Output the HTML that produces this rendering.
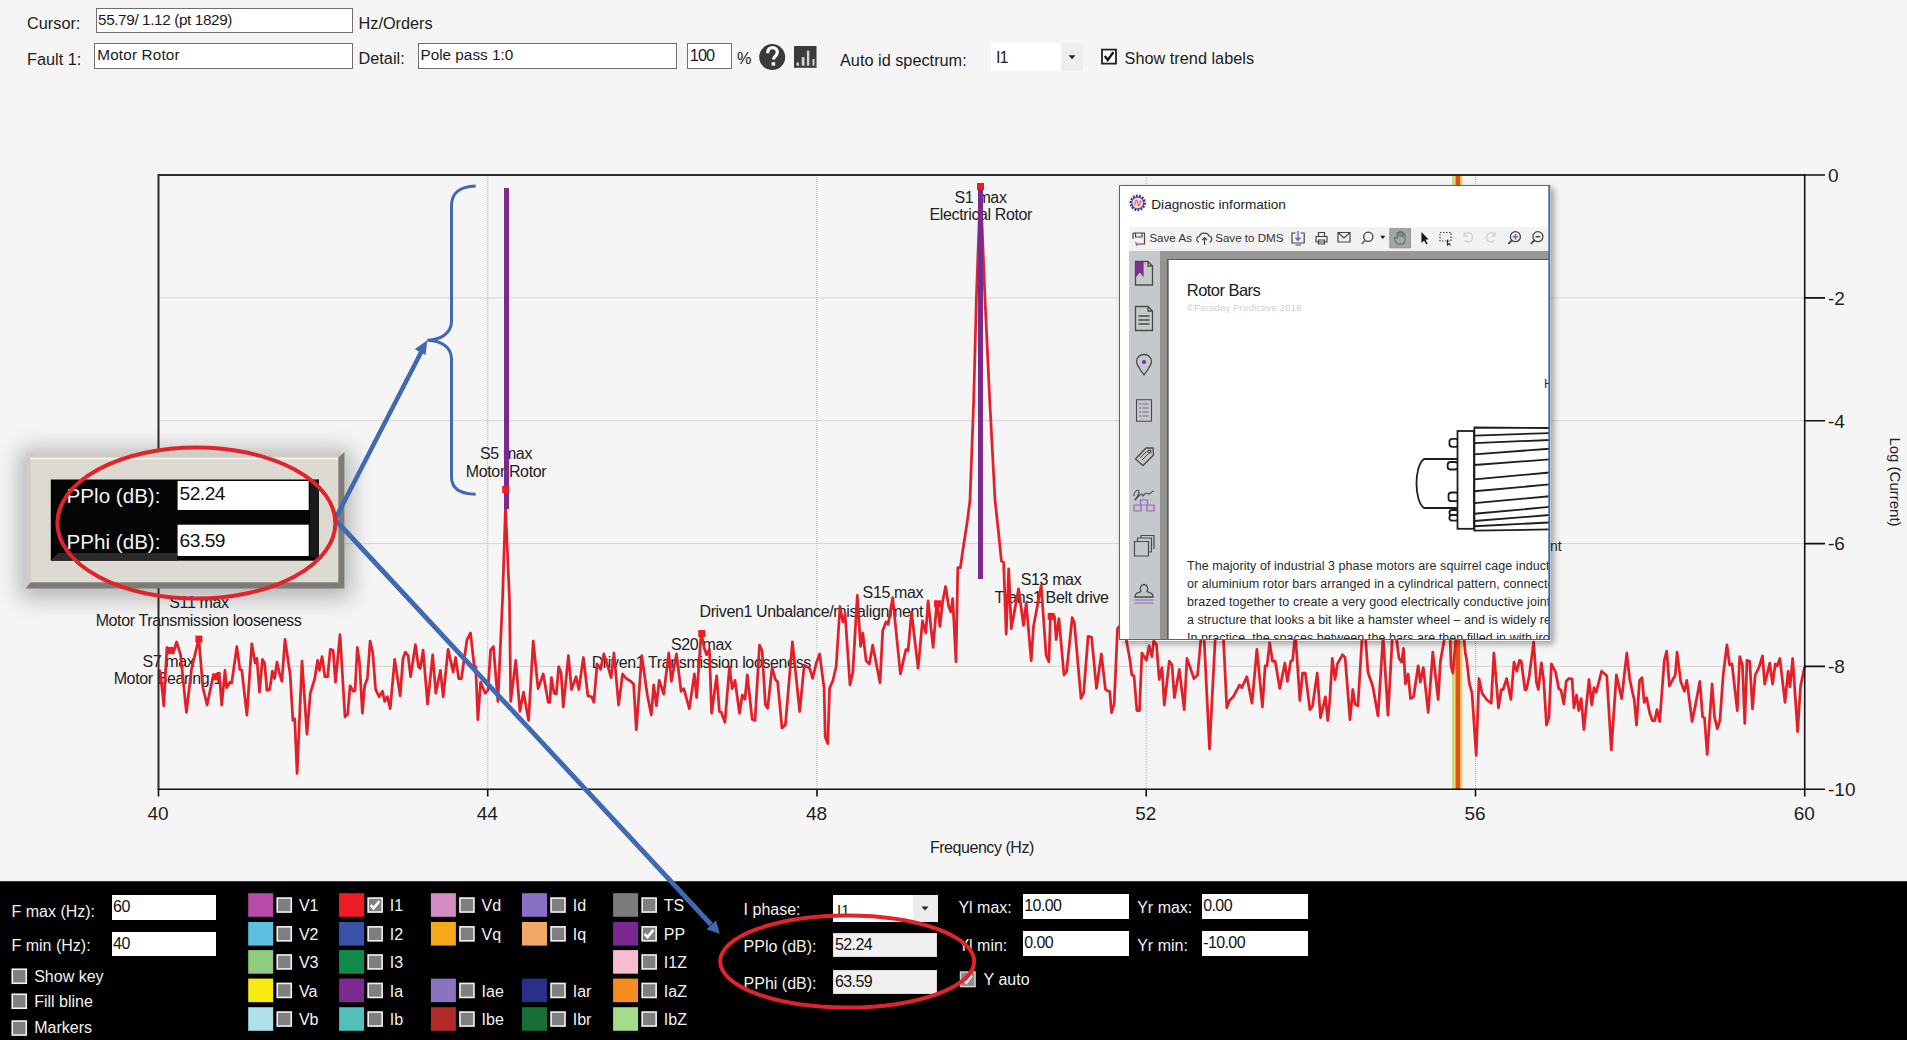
<!DOCTYPE html>
<html><head><meta charset="utf-8">
<style>
html,body{margin:0;padding:0;}
body{width:1907px;height:1040px;overflow:hidden;position:relative;background:#f5f5f5;font-family:"Liberation Sans",sans-serif;color:#1b1b1b;}
.a{position:absolute;white-space:nowrap;line-height:1;}
.box{position:absolute;background:#fff;border:1px solid #6d6d6d;box-sizing:border-box;}
svg{position:absolute;left:0;top:0;overflow:visible;}
</style></head><body>
<div class="a" style="left:27.0px;top:14.80px;font-size:16.3px;">Cursor:</div>
<div class="box" style="left:95.5px;top:7.5px;width:257px;height:25.5px;border-color:#707070;"></div>
<div class="a" style="left:98.0px;top:11.55px;font-size:15.3px;letter-spacing:-0.38px;">55.79/ 1.12 (pt 1829)</div>
<div class="a" style="left:358.5px;top:14.60px;font-size:16.3px;">Hz/Orders</div>
<div class="a" style="left:27.0px;top:51.40px;font-size:16.3px;">Fault 1:</div>
<div class="box" style="left:94.3px;top:43.2px;width:259px;height:25.5px;border-color:#707070;"></div>
<div class="a" style="left:97.3px;top:47.45px;font-size:15.3px;letter-spacing:0.15px;">Motor Rotor</div>
<div class="a" style="left:358.5px;top:49.80px;font-size:16.3px;">Detail:</div>
<div class="box" style="left:418px;top:43.2px;width:259px;height:25.5px;border-color:#707070;"></div>
<div class="a" style="left:420.5px;top:47.35px;font-size:15.3px;">Pole pass 1:0</div>
<div class="box" style="left:686.8px;top:43px;width:45px;height:25.5px;border-color:#707070;"></div>
<div class="a" style="left:689.8px;top:46.70px;font-size:16.3px;letter-spacing:-0.9px;">100</div>
<div class="a" style="left:737.0px;top:49.50px;font-size:16.3px;">%</div>
<svg width="1907" height="80">
  <circle cx="772.2" cy="57.1" r="13" fill="#3a3a3a"/>
  <path d="M767.6,53.2 C767.6,49.2 770,47.6 772.4,47.6 C775.3,47.6 777.3,49.6 777.3,52.3 C777.3,55.8 773.5,56.2 773.5,59.4" fill="none" stroke="#fff" stroke-width="3.2"/>
  <rect x="771.6" y="62.2" width="3.6" height="3.4" fill="#fff"/>
  <rect x="794" y="46" width="22.5" height="21.8" fill="#3c3c3c"/>
  <rect x="796.5" y="62.4" width="2.4" height="3.3" fill="#d4d4d4"/>
  <rect x="801.7" y="57.2" width="2.8" height="8.5" fill="#d4d4d4"/>
  <rect x="806.9" y="50.6" width="2.4" height="15.1" fill="#d4d4d4"/>
  <rect x="812.5" y="59" width="2" height="6.7" fill="#d4d4d4"/>
</svg>
<div class="a" style="left:840.0px;top:52.00px;font-size:16.3px;">Auto id spectrum:</div>
<div class="a" style="left:991.3px;top:43.3px;width:92px;height:27.7px;background:#fff;"></div>
<div class="a" style="left:1060.6px;top:43.3px;width:22.4px;height:27.7px;background:#eeeeee;"></div>
<div class="a" style="left:996.0px;top:49.20px;font-size:16.3px;color:#222;letter-spacing:-1px;">I1</div>
<div class="a" style="left:1124.6px;top:50.20px;font-size:16.3px;">Show trend labels</div>
<svg width="1907" height="80">
  <path d="M1068.5,55.3 L1075.5,55.3 L1072,59.3 Z" fill="#222"/>
  <rect x="1102" y="49.6" width="14" height="14" fill="#fff" stroke="#222" stroke-width="1.8"/>
  <path d="M1104.8,56 L1107.8,60 L1113.4,52.2" fill="none" stroke="#111" stroke-width="2.3"/>
</svg>
<svg width="1907" height="880" style="left:0;top:0;" font-family="Liberation Sans">
<g stroke="#b4b4b4" stroke-width="1" stroke-dasharray="1,1"><line x1="487.7" y1="175.0" x2="487.7" y2="789.3"/><line x1="817.0" y1="175.0" x2="817.0" y2="789.3"/><line x1="1146.2" y1="175.0" x2="1146.2" y2="789.3"/><line x1="1475.5" y1="175.0" x2="1475.5" y2="789.3"/><line x1="158.5" y1="297.9" x2="1804.7" y2="297.9"/><line x1="158.5" y1="420.7" x2="1804.7" y2="420.7"/><line x1="158.5" y1="543.6" x2="1804.7" y2="543.6"/><line x1="158.5" y1="666.4" x2="1804.7" y2="666.4"/></g>
<g font-size="16" letter-spacing="-0.37" fill="#222" text-anchor="middle"><text x="199" y="607.7">S11 max</text><text x="198.5" y="625.5">Motor Transmission looseness</text><text x="168.4" y="666.5">S7 max</text><text x="167.8" y="684.4">Motor Bearing 1</text><text x="506" y="458.8">S5 max</text><text x="506" y="476.6">Motor Rotor</text><text x="701.3" y="649.6">S20 max</text><text x="701.3" y="667.5">Driven1 Transmission looseness</text><text x="892.9" y="598">S15 max</text><text x="811.3" y="616.9">Driven1 Unbalance/misalignment</text><text x="980.5" y="202.5">S1 max</text><text x="980.8" y="220.4">Electrical Rotor</text><text x="1051" y="584.8">S13 max</text><text x="1051.6" y="602.5">Trans1 Belt drive</text></g>
<rect x="1452" y="175.0" width="10.5" height="614.3" fill="#c2da94"/>
<rect x="1453.8" y="175.0" width="7.4" height="614.3" fill="#efd868"/>
<rect x="1455.6" y="175.0" width="4.6" height="614.3" fill="#e4501c"/>
<path d="M159.0,669.4 L160.5,673.1 L163.8,705.9 L166.9,647.5 L168.7,653.0 L171.4,649.3 L173.3,653.0 L176.6,642.0 L180.6,654.8 L186.4,712.3 L191.5,669.4 L198.8,638.4 L202.9,687.7 L207.1,705.0 L213.4,674.9 L216.2,676.7 L219.3,673.1 L221.7,705.0 L225.0,670.3 L226.6,687.7 L229.9,682.2 L231.7,683.1 L236.8,646.6 L239.9,669.4 L241.8,670.3 L246.9,715.1 L251.8,643.8 L255.1,663.0 L256.9,658.4 L259.5,692.2 L262.4,659.4 L264.6,663.0 L267.0,690.4 L269.7,689.5 L272.4,671.2 L274.6,678.5 L277.0,662.1 L279.2,672.1 L281.9,681.3 L285.0,639.3 L290.2,674.9 L292.9,720.5 L294.7,718.7 L297.1,773.5 L302.0,661.2 L307.0,734.2 L310.3,693.2 L314.8,678.5 L317.6,660.3 L319.4,670.3 L322.1,656.6 L324.9,676.7 L327.6,676.7 L330.3,649.3 L333.1,650.2 L335.5,682.2 L340.0,634.7 L345.0,716.9 L347.7,714.2 L350.1,685.8 L353.2,691.3 L355.1,690.4 L357.3,647.5 L359.5,662.1 L362.4,713.2 L364.6,685.8 L367.4,678.5 L370.1,641.1 L372.8,653.0 L375.6,689.5 L379.2,696.8 L382.5,691.3 L384.7,701.4 L387.4,696.8 L390.2,708.7 L394.7,659.4 L400.2,695.9 L403.0,658.4 L405.3,652.1 L408.1,655.7 L410.6,676.7 L415.4,644.7 L418.5,666.7 L420.3,668.5 L423.1,650.2 L427.6,704.1 L432.7,654.8 L435.8,693.2 L440.4,670.3 L443.2,696.8 L448.1,649.3 L453.2,672.1 L455.6,657.5 L458.7,678.5 L461.4,678.5 L466.9,640.2 L470.5,632.9 L474.2,665.8 L475.7,666.7 L477.9,719.6 L480.6,682.2 L485.2,693.2 L487.9,690.4 L490.6,650.2 L493.4,646.6 L497.9,701.4 L502.5,600.0 L505.5,507.0 L509.5,600.0 L510.7,701.4 L515.8,660.3 L519.9,711.4 L523.5,692.2 L528.6,720.5 L533.2,641.1 L538.1,688.6 L543.2,674.0 L548.2,702.3 L549.9,702.3 L551.4,677.6 L554.1,693.2 L556.3,694.1 L558.7,666.7 L561.1,673.1 L563.3,706.8 L568.4,655.7 L571.5,689.5 L576.1,676.7 L578.8,689.5 L583.4,657.5 L587.9,695.9 L591.6,696.8 L593.9,702.3 L597.1,663.9 L600.7,669.4 L603.8,653.9 L608.0,666.7 L611.1,677.6 L614.0,653.0 L618.6,705.0 L622.6,674.0 L626.3,678.5 L630.8,681.3 L633.6,684.0 L636.3,729.7 L641.8,655.7 L647.3,695.0 L651.3,715.1 L653.7,684.9 L656.4,705.9 L659.2,680.4 L663.7,694.1 L668.8,653.0 L671.4,681.3 L676.5,653.9 L681.1,691.3 L683.8,688.6 L689.3,708.7 L694.4,674.0 L696.6,697.7 L701.2,632.9 L703.9,646.6 L706.6,654.8 L709.4,649.3 L711.6,713.2 L716.7,675.8 L719.4,711.4 L721.3,712.3 L724.9,722.4 L729.5,666.7 L732.2,688.6 L735.0,680.4 L739.5,713.2 L742.3,695.0 L744.9,699.4 L747.3,675.0 L752.2,719.3 L755.0,720.4 L759.5,645.2 L762.1,650.7 L765.4,704.9 L767.7,708.2 L772.1,667.3 L775.4,679.5 L777.6,681.7 L782.0,728.1 L785.4,724.8 L792.4,641.9 L799.7,711.5 L804.2,665.1 L809.7,668.4 L812.6,678.4 L816.3,662.9 L819.6,654.0 L824.1,688.3 L825.2,737.0 L827.8,743.6 L829.6,688.3 L832.9,680.6 L836.2,666.2 L840.0,606.5 L842.9,621.9 L845.1,614.2 L850.0,685.0 L852.8,672.8 L857.3,595.4 L860.6,646.3 L862.8,633.0 L866.1,660.7 L869.4,664.0 L872.7,645.2 L880.0,682.8 L882.7,630.8 L886.0,621.9 L888.2,624.2 L892.7,597.6 L900.4,673.9 L905.9,649.6 L908.1,650.7 L911.5,612.0 L918.1,668.4 L922.5,620.8 L925.8,633.0 L928.1,600.9 L933.1,647.4 L936.9,602.0 L937.2,602.0 L939.9,626.4 L942.7,600.9 L945.6,586.5 L948.7,606.5 L950.9,612.0 L952.7,598.7 L956.0,661.8 L957.8,567.7 L960.4,567.7 L962.5,552.5 L967.5,520.0 L970.0,500.0 L973.7,400.0 L976.4,297.0 L980.5,186.0 L984.9,297.0 L989.7,400.0 L995.0,500.0 L998.8,535.0 L1001.4,561.1 L1003.6,562.2 L1006.2,634.1 L1008.7,568.8 L1011.3,628.6 L1018.6,588.8 L1023.5,625.3 L1026.2,603.1 L1031.2,660.7 L1033.5,626.4 L1041.2,585.4 L1046.1,655.1 L1048.9,661.8 L1050.5,614.2 L1054.5,616.4 L1056.2,639.6 L1058.9,618.6 L1064.0,675.0 L1066.6,671.7 L1072.2,617.5 L1074.4,623.1 L1081.0,698.3 L1083.7,692.7 L1088.1,636.3 L1091.6,637.4 L1096.5,688.3 L1101.4,654.0 L1105.4,689.4 L1107.1,690.5 L1109.8,691.6 L1111.5,712.7 L1114.2,703.8 L1117.5,628.6 L1123.1,621.9 L1130.0,660.3 L1131.8,674.9 L1134.0,675.8 L1136.9,710.5 L1139.5,710.5 L1141.9,653.0 L1146.4,660.3 L1149.2,645.7 L1151.9,656.6 L1153.7,641.1 L1156.5,644.7 L1159.2,679.5 L1162.0,667.6 L1164.3,705.0 L1169.3,661.2 L1172.0,664.8 L1174.4,697.7 L1179.3,669.4 L1184.2,709.6 L1187.0,658.4 L1193.9,678.5 L1197.6,674.9 L1201.6,631.1 L1204.0,636.5 L1209.5,748.9 L1215.8,627.4 L1223.2,632.9 L1226.8,707.8 L1229.5,700.5 L1233.2,696.8 L1239.6,684.9 L1241.8,687.7 L1246.9,676.7 L1252.0,703.2 L1256.9,649.3 L1262.4,706.8 L1265.2,665.8 L1267.0,665.8 L1269.7,642.9 L1272.5,661.2 L1275.2,661.2 L1279.8,688.6 L1284.9,663.0 L1287.4,681.3 L1290.7,661.2 L1292.6,660.3 L1295.3,632.9 L1299.9,700.5 L1302.6,673.1 L1305.3,673.1 L1309.9,709.6 L1312.6,705.9 L1317.2,673.1 L1320.5,717.8 L1325.4,696.8 L1327.8,720.5 L1329.9,698.6 L1332.3,658.4 L1335.0,679.5 L1337.4,663.9 L1342.4,654.8 L1345.1,657.5 L1350.0,719.6 L1352.8,689.5 L1355.1,704.1 L1357.9,705.9 L1362.4,632.9 L1365.2,632.9 L1367.9,672.1 L1372.9,686.8 L1378.0,716.0 L1383.1,636.5 L1388.0,715.1 L1392.6,632.9 L1396.2,636.5 L1399.0,658.4 L1401.7,662.1 L1403.5,648.4 L1405.4,684.0 L1408.1,674.0 L1410.5,698.6 L1413.6,696.8 L1418.2,665.8 L1420.3,682.2 L1423.3,667.6 L1428.2,712.3 L1432.8,652.1 L1438.2,699.5 L1440.4,661.2 L1445.5,632.9 L1450.1,634.7 L1451.0,665.8 L1452.9,673.1 L1456.5,632.9 L1463.8,636.5 L1465.3,653.0 L1466.6,659.4 L1469.3,683.1 L1472.0,693.2 L1476.2,755.3 L1479.0,678.5 L1482.1,693.2 L1486.6,699.5 L1491.2,703.2 L1493.9,653.0 L1498.5,707.8 L1501.3,689.5 L1503.1,689.5 L1506.7,678.5 L1510.9,699.5 L1514.0,662.1 L1516.8,671.2 L1519.5,660.3 L1521.3,661.2 L1524.9,689.5 L1526.4,689.5 L1529.1,676.7 L1533.7,642.0 L1536.4,682.2 L1538.3,689.5 L1541.4,663.0 L1543.7,680.4 L1546.5,725.1 L1548.9,717.8 L1551.4,663.9 L1555.6,672.1 L1558.7,688.6 L1561.1,690.4 L1563.8,704.1 L1566.2,681.3 L1568.9,678.5 L1572.1,678.9 L1573.9,707.8 L1576.6,695.0 L1578.8,710.5 L1581.2,698.6 L1583.9,729.7 L1589.0,679.5 L1591.8,705.0 L1594.0,687.7 L1596.3,692.2 L1601.6,671.2 L1606.8,675.8 L1611.3,749.8 L1616.4,674.9 L1621.7,698.6 L1626.8,653.0 L1629.6,678.5 L1632.9,694.1 L1634.2,699.5 L1636.5,725.1 L1639.6,680.4 L1642.0,677.6 L1644.2,702.3 L1646.6,697.7 L1649.7,713.2 L1652.4,720.5 L1654.8,720.5 L1657.0,709.6 L1659.7,721.5 L1664.3,660.3 L1666.7,651.1 L1669.4,685.8 L1675.3,674.9 L1677.1,652.1 L1680.7,681.3 L1684.4,691.3 L1686.8,680.4 L1692.1,721.5 L1695.3,705.9 L1699.9,681.3 L1702.6,716.9 L1704.5,717.8 L1707.2,754.3 L1712.1,684.0 L1714.5,716.9 L1717.3,728.8 L1719.9,720.7 L1723.2,675.0 L1726.9,644.8 L1729.6,664.9 L1732.0,664.0 L1737.3,710.6 L1739.7,656.7 L1742.4,664.9 L1744.8,723.4 L1747.0,660.3 L1749.7,661.2 L1752.5,708.8 L1755.2,675.0 L1758.9,667.6 L1762.5,655.8 L1764.7,684.1 L1769.8,663.1 L1772.6,684.1 L1775.3,664.0 L1777.2,665.8 L1779.9,658.5 L1785.0,702.4 L1788.1,671.3 L1790.0,686.8 L1792.7,658.5 L1797.6,731.6 L1800.6,685.9 L1804.6,666.7" fill="none" stroke="#e3202a" stroke-width="2.75" stroke-linejoin="round"/>
<rect x="504" y="188" width="5" height="321" fill="#7b2a8c"/>
<rect x="978" y="186" width="5" height="393" fill="#7b2a8c"/>
<rect x="166.5" y="646.9" width="7" height="7" fill="#ee1c24"/>
<rect x="195.4" y="635.6" width="7" height="7" fill="#ee1c24"/>
<rect x="212.4" y="673.4" width="7" height="7" fill="#ee1c24"/>
<rect x="502.2" y="486.0" width="7" height="7" fill="#ee1c24"/>
<rect x="698.3" y="630.0" width="7" height="7" fill="#ee1c24"/>
<rect x="934.0" y="600.3" width="7" height="7" fill="#ee1c24"/>
<rect x="1047.7" y="612.9" width="7" height="7" fill="#ee1c24"/>
<rect x="977.0" y="183.0" width="7" height="7" fill="#ee1c24"/>
<path d="M158.5,789.3 L158.5,175.0 L1804.7,175.0" fill="none" stroke="#2e2e2e" stroke-width="2"/>
<path d="M157.5,789.3 L1804.7,789.3 M1804.7,174.0 L1804.7,790.3" fill="none" stroke="#111" stroke-width="1.6"/>
<path d="M1804.7,175.0 L1825,175.0 M1804.7,297.9 L1825,297.9 M1804.7,420.7 L1825,420.7 M1804.7,543.6 L1825,543.6 M1804.7,666.4 L1825,666.4 M1804.7,789.3 L1825,789.3 M158.5,789.3 L158.5,796.5 M487.7,789.3 L487.7,796.5 M817.0,789.3 L817.0,796.5 M1146.2,789.3 L1146.2,796.5 M1475.5,789.3 L1475.5,796.5 M1804.7,789.3 L1804.7,796.5" stroke="#111" stroke-width="1.6"/>
<g font-size="19" fill="#1e1e1e"><text x="1828" y="181.8">0</text><text x="1828" y="304.7">-2</text><text x="1828" y="427.5">-4</text><text x="1828" y="550.4">-6</text><text x="1828" y="673.2">-8</text><text x="1828" y="796.1">-10</text><text x="158.0" y="819.8" text-anchor="middle">40</text><text x="487.2" y="819.8" text-anchor="middle">44</text><text x="816.5" y="819.8" text-anchor="middle">48</text><text x="1145.7" y="819.8" text-anchor="middle">52</text><text x="1475.0" y="819.8" text-anchor="middle">56</text><text x="1804.2" y="819.8" text-anchor="middle">60</text></g>
<text x="981.9" y="852.9" font-size="16" letter-spacing="-0.45" text-anchor="middle" fill="#222">Frequency (Hz)</text>
<text transform="translate(1889.5,482) rotate(90)" font-size="15" text-anchor="middle" fill="#222">Log (Current)</text>
</svg>
<!-- ===== DIAGNOSTIC WINDOW ===== -->
<div class="a" style="left:1119px;top:185px;width:432px;height:456px;box-shadow:3px 3px 6px rgba(0,0,0,0.35);"></div>
<div class="a" style="left:1119px;top:185px;width:431px;height:455px;background:#fff;border:1.5px solid #3e6ca2;box-sizing:border-box;overflow:hidden;">
  <!-- toolbar bg -->
  <div class="a" style="left:8.5px;top:41px;width:430px;height:24px;background:#f2f2f2;"></div>
  <!-- sidebar -->
  <div class="a" style="left:8.5px;top:65px;width:31px;height:400px;background:#c6c9cb;"></div>
  <div class="a" style="left:39.5px;top:65px;width:9px;height:400px;background:#929292;"></div>
  <div class="a" style="left:39.5px;top:65px;width:400px;height:8.5px;background:#979797;"></div>
  <div class="a" style="left:47px;top:72.5px;width:400px;height:1px;background:#5a5a5a;"></div>
  <div class="a" style="left:47px;top:72.5px;width:1px;height:400px;background:#5a5a5a;"></div>
  <!-- page text -->
  <div class="a" style="left:66.8px;top:96.13px;font-size:16.5px;color:#1a1a1a;letter-spacing:-0.55px;">Rotor Bars</div>
  <div class="a" style="left:67px;top:117px;font-size:9.5px;color:#cfcfcf;letter-spacing:0.2px;">©Faraday Predictive 2018</div>
  <div class="a" style="left:67px;top:372px;font-size:12.5px;line-height:17.9px;color:#2a2a2a;letter-spacing:0.05px;">The majority of industrial 3 phase motors are squirrel cage induction<br>or aluminium rotor bars arranged in a cylindrical pattern, connected<br>brazed together to create a very good electrically conductive joint<br>a structure that looks a bit like a hamster wheel – and is widely reg<br>In practice, the spaces between the bars are then filled in with iron</div>
  <div class="a" style="left:424px;top:192px;font-size:12.5px;color:#2a2a2a;">H</div>
</div>
<div class="a" style="left:1550px;top:539px;font-size:14px;color:#1e1e1e;">nt</div>
<svg width="1907" height="700" style="left:0;top:0;">
  <!-- title icon -->
  <circle cx="1137.7" cy="202.9" r="5.6" fill="#f6d6e0"/>
  <circle cx="1137.7" cy="202.9" r="7" fill="none" stroke="#463c86" stroke-width="2.6" stroke-dasharray="1.9,1.2"/>
  <circle cx="1137.7" cy="202.9" r="6" fill="none" stroke="#52489a" stroke-width="1.2"/>
  <path d="M1134.6,205.5 C1135.8,199 1137.2,199 1137.7,202.9 C1138.2,206.8 1139.6,206.8 1140.8,200.3" fill="none" stroke="#e05a6a" stroke-width="1.1"/>
  <text x="1151.3" y="208.8" font-family="Liberation Sans" font-size="13.6" fill="#222">Diagnostic information</text>
  <!-- toolbar items -->
  <g font-family="Liberation Sans" font-size="11.6" fill="#333">
    <text x="1149.4" y="241.7">Save As</text>
    <text x="1215.2" y="241.7">Save to DMS</text>
  </g>
  <g fill="none" stroke="#444" stroke-width="1.2">
    <path d="M1133,233 L1144.5,233 L1144.5,244 L1137,244 M1133,233 L1133,239 M1135.5,233 L1135.5,237 L1142,237 L1142,233"/>
    <path d="M1199,242 C1196,242 1196,236.5 1199.5,236.5 C1200,232 1208,232 1209,236 C1212.5,236 1212.5,242 1209.5,242"/>
    <path d="M1204.5,245 L1204.5,237.5 M1202,240 L1204.5,237.5 L1207,240"/>
    <path d="M1295.5,233 L1292,233 L1292,243 L1304.2,243 L1304.2,233 L1300.5,233 M1295.5,245 L1301,245"/>
    <path d="M1316,236.5 L1327,236.5 L1327,242 L1316,242 Z M1318.5,236.5 L1318.5,232.5 L1324.5,232.5 L1324.5,236.5 M1318.5,240 L1324.5,240 L1324.5,244 L1318.5,244 Z"/>
    <path d="M1338,232.5 L1350,232.5 L1350,242 L1338,242 Z M1338,232.5 L1344,238 L1350,232.5"/>
    <path d="M1421.5,232 L1421.5,243 L1424,240.5 L1426.5,244.5 L1427.5,243.8 L1425.5,239.5 L1428.5,239.5 Z" fill="#111" stroke="none"/>
    <path d="M1440,232.5 L1451,232.5 L1451,241 L1440,241 Z" stroke-dasharray="1.5,1.5"/>
  </g>
  <path d="M1135,241 L1139,245 L1136,246 Z" fill="#9a6ab8"/>
  <path d="M1298,231 L1298,240 M1295.5,237.5 L1298,240.5 L1300.5,237.5" fill="none" stroke="#8a5ab0" stroke-width="1.4"/>
  <!-- search -->
  <circle cx="1368.3" cy="236.8" r="4.6" fill="none" stroke="#444" stroke-width="1.3"/>
  <path d="M1365,240.3 L1361.8,243.8" stroke="#8a5ab0" stroke-width="1.8"/>
  <path d="M1380.3,235.8 L1385.3,235.8 L1382.8,239 Z" fill="#111"/>
  <!-- hand button -->
  <rect x="1389.8" y="228.7" width="20.8" height="19.2" fill="#a3a7a7" stroke="#8a8e8e" stroke-width="0.8"/>
  <path d="M1397,244 C1395,241 1393.5,238.5 1394.5,237.5 C1395.5,236.8 1396.5,238 1397,239 L1397,233.5 C1397,232 1399,232 1399,233.5 L1399,237 L1399,232.5 C1399,231 1401,231 1401,232.5 L1401,237 L1401,233 C1401,231.8 1403,231.8 1403,233 L1403,237.5 L1403,234.5 C1403,233.5 1405,233.5 1405,234.5 L1405,240 C1405,242 1404,243.5 1403,244 Z" fill="none" stroke="#666a6a" stroke-width="1.1"/>
  <path d="M1447.5,239.5 L1447.5,245 L1449,243.5 L1450.5,245.5" stroke="#222" stroke-width="1.1" fill="none"/>
  <!-- undo/redo light -->
  <path d="M1464,235 C1466,231.5 1472.5,232 1472.5,237.5 C1472.5,242 1467,243 1465,240.5 M1464,232.5 L1464,236 L1467.5,236" fill="none" stroke="#cfcfcf" stroke-width="1.3"/>
  <path d="M1495,235 C1493,231.5 1486.5,232 1486.5,237.5 C1486.5,242 1492,243 1494,240.5 M1495,232.5 L1495,236 L1491.5,236" fill="none" stroke="#cfcfcf" stroke-width="1.3"/>
  <!-- zoom in/out -->
  <circle cx="1515.4" cy="236.7" r="5" fill="none" stroke="#444" stroke-width="1.3"/>
  <path d="M1511.8,240.3 L1508.4,243.8" stroke="#444" stroke-width="1.8"/>
  <path d="M1515.4,234 L1515.4,239.4 M1512.7,236.7 L1518.1,236.7" stroke="#8a5ab0" stroke-width="1.6"/>
  <circle cx="1537.9" cy="236.7" r="5" fill="none" stroke="#444" stroke-width="1.3"/>
  <path d="M1534.3,240.3 L1530.9,243.8" stroke="#444" stroke-width="1.8"/>
  <path d="M1535.5,236.7 L1540.3,236.7" stroke="#444" stroke-width="1.4"/>
  <!-- sidebar icons -->
  <g fill="none" stroke="#4a4a4a" stroke-width="1.3">
    <path d="M1135.5,261.5 L1148,261.5 L1152.5,266 L1152.5,285 L1135.5,285 Z M1148,261.5 L1148,266 L1152.5,266"/>
    <path d="M1135.5,306.5 L1148,306.5 L1152.5,311 L1152.5,330.5 L1135.5,330.5 Z M1148,306.5 L1148,311 L1152.5,311 M1138.5,316 L1149.5,316 M1138.5,320 L1149.5,320 M1138.5,324 L1149.5,324"/>
    <path d="M1144,375 C1140,369 1136.5,365 1136.5,361.5 C1136.5,357 1140,354.5 1144,354.5 C1148,354.5 1151.5,357 1151.5,361.5 C1151.5,365 1148,369 1144,375 Z"/>
    <path d="M1136.5,399.8 L1151.5,399.8 L1151.5,421.3 L1136.5,421.3 Z M1139.5,404 L1141,404 M1139.5,408 L1141,408 M1139.5,412 L1141,412 M1139.5,416 L1141,416" stroke-width="1.1"/>
    <path d="M1135.5,459 L1146,448 L1153,448 L1153.5,455 L1143,465.5 Z" transform="rotate(0)"/>
    <circle cx="1149.5" cy="451.7" r="1.5"/>
    <path d="M1140,458 L1146.5,451.5 M1142,460 L1148,454" stroke-width="1"/>
    <path d="M1134,496 C1134,490 1139,489 1139,492 C1139,496 1134,500 1135,500 C1137,499 1140,493 1142,494 C1143,496 1142,497 1144,495 C1146,492 1147,493 1148,494 C1150,495 1151,491 1154,491" stroke-width="1.1"/>
    <path d="M1134.5,541.5 L1148.5,541.5 L1148.5,556 L1134.5,556 Z M1137.5,541.5 L1137.5,538 L1151.5,538 L1151.5,552 L1148.5,552 M1141,538 L1141,535.5 L1154,535.5 L1154,549" stroke-width="1.2"/>
    <path d="M1135,597 C1135,591.5 1139.5,593 1141,591.5 C1139,588 1141,584.5 1144,584.5 C1147,584.5 1149,588 1147,591.5 C1148.5,593 1153,591.5 1153,597 Z"/>
  </g>
  <path d="M1136,262 L1143.6,262 L1143.6,277 L1139.8,272.5 L1136,277 Z" fill="#7d2e90"/>
  <circle cx="1144" cy="362" r="2" fill="#7d2e90"/>
  <path d="M1142.5,404 L1148.5,404 M1142.5,408 L1148.5,408 M1142.5,412 L1148.5,412 M1142.5,416 L1148.5,416" stroke="#8a5ab0" stroke-width="1.1"/>
  <g fill="none" stroke="#9c5fc0" stroke-width="1.2">
    <path d="M1134,505 L1141,505 L1141,511 L1134,511 Z M1147,505 L1154,505 L1154,511 L1147,511 Z M1140.5,500 L1147.5,500 L1147.5,505 L1140.5,505 Z"/>
    <path d="M1134.5,600 L1153.5,600 M1134.5,603 L1153.5,603"/>
  </g>
  <!-- motor drawing -->
  <g fill="#fff" stroke="#1e1e1e" stroke-width="1.8">
    <path d="M1457,459 L1424,459 C1414,466 1414,501 1424,508 L1457,508"/>
    <rect x="1449.4" y="438.8" width="9" height="8" rx="3"/>
    <rect x="1447.6" y="462" width="10.5" height="7.5" rx="3"/>
    <rect x="1448.5" y="492.5" width="10" height="8.7" rx="3"/>
    <rect x="1449.4" y="510" width="9" height="5" rx="2.5"/>
    <rect x="1449.4" y="515" width="9" height="5.6" rx="2.5"/>
    <rect x="1457.5" y="431" width="16.5" height="97.8"/>
    <path d="M1549.5,428 L1474.4,427.5 L1474.4,530.6 L1549.5,529.4"/>
    <path d="M1474.4,435.6 L1549.5,433.1 M1474.4,443.1 L1549.5,440 M1474.4,454.4 L1549.5,448.75 M1474.4,465 L1549.5,459.4 M1474.4,479.4 L1549.5,472.5 M1474.4,491.25 L1549.5,484.4 M1474.4,503.1 L1549.5,496.25 M1474.4,513.75 L1549.5,506.9 M1474.4,521 L1549.5,515 M1474.4,526.25 L1549.5,522.5" fill="none"/>
  </g>
  <rect x="1548.3" y="185" width="2" height="455" fill="#3e6ca2"/>
</svg>

<div class="a" style="left:25.5px;top:452.3px;width:319px;height:136.2px;box-shadow:0 4px 22px 6px rgba(0,0,0,0.28);"></div>
<div class="a" style="left:25.5px;top:452.3px;width:319px;height:136.2px;background:#dcdad2;"></div>
<svg width="400" height="620">
  <path d="M25.5,452.3 L344.5,452.3 L339.5,457.3 L30.5,457.3 L30.5,582.5 L25.5,588.5 Z" fill="#cfccc4"/>
  <path d="M30.5,458.6 L339,458.6" stroke="#f4f2ec" stroke-width="1.6"/>
  <path d="M344.5,452.3 L344.5,588.5 L25.5,588.5 L30.5,582.5 L338.5,582.5 L338.5,457.3 Z" fill="#7d7b76"/>
  <path d="M30.5,582.5 L338.5,582.5 L338.5,457.3" fill="none" stroke="#9d9b95" stroke-width="1"/>
  <rect x="50.8" y="479.5" width="268.2" height="81.2" fill="#050505"/>
  <path d="M50.8,560.7 L58,553 L177,553 L177,560.7 Z" fill="#2a2a2a"/>
  <path d="M310,481 L319,479.5 L319,560.7 L310,556 Z" fill="#1a1a1a"/>
  <rect x="177.6" y="481" width="131.1" height="29" fill="#fff"/>
  <rect x="177.6" y="524.7" width="131.1" height="31.3" fill="#fff"/>
</svg>
<div class="a" style="left:66.6px;top:485.56px;font-size:20.6px;color:#f4f4f4;">PPlo (dB):</div>
<div class="a" style="left:66.6px;top:531.76px;font-size:20.6px;color:#f4f4f4;">PPhi (dB):</div>
<div class="a" style="left:179.5px;top:484.14px;font-size:19.2px;color:#111;letter-spacing:-0.5px;">52.24</div>
<div class="a" style="left:179.5px;top:530.64px;font-size:19.2px;color:#111;letter-spacing:-0.5px;">63.59</div>
<div class="a" style="left:0;top:880.5px;width:1907px;height:160px;background:#000;border-top:1px solid #3a3a3a;box-sizing:border-box;"></div>
<div class="a" style="left:11.5px;top:903.65px;font-size:16px;color:#f2f2f2;">F max (Hz):</div>
<div class="a" style="left:11.5px;top:937.95px;font-size:16px;color:#f2f2f2;">F min (Hz):</div>
<div class="a" style="left:111.5px;top:895.4px;width:104px;height:24.3px;background:#fff;"></div>
<div class="a" style="left:111.5px;top:932.3px;width:104px;height:24px;background:#fff;"></div>
<div class="a" style="left:113.0px;top:898.85px;font-size:16px;color:#111;letter-spacing:-0.4px;">60</div>
<div class="a" style="left:113.0px;top:935.95px;font-size:16px;color:#111;letter-spacing:-0.4px;">40</div>
<div class="a" style="left:34.2px;top:968.75px;font-size:16px;color:#f2f2f2;">Show key</div>
<div class="a" style="left:34.2px;top:994.15px;font-size:16px;color:#f2f2f2;">Fill bline</div>
<div class="a" style="left:34.2px;top:1020.25px;font-size:16px;color:#f2f2f2;">Markers</div>
<div class="a" style="left:298.9px;top:898.35px;font-size:16px;color:#f2f2f2;">V1</div>
<div class="a" style="left:298.9px;top:927.15px;font-size:16px;color:#f2f2f2;">V2</div>
<div class="a" style="left:298.9px;top:955.25px;font-size:16px;color:#f2f2f2;">V3</div>
<div class="a" style="left:298.9px;top:983.75px;font-size:16px;color:#f2f2f2;">Va</div>
<div class="a" style="left:298.9px;top:1012.35px;font-size:16px;color:#f2f2f2;">Vb</div>
<div class="a" style="left:389.8px;top:898.35px;font-size:16px;color:#f2f2f2;">I1</div>
<div class="a" style="left:389.8px;top:927.15px;font-size:16px;color:#f2f2f2;">I2</div>
<div class="a" style="left:389.8px;top:955.25px;font-size:16px;color:#f2f2f2;">I3</div>
<div class="a" style="left:389.8px;top:983.75px;font-size:16px;color:#f2f2f2;">Ia</div>
<div class="a" style="left:389.8px;top:1012.35px;font-size:16px;color:#f2f2f2;">Ib</div>
<div class="a" style="left:481.6px;top:898.35px;font-size:16px;color:#f2f2f2;">Vd</div>
<div class="a" style="left:481.6px;top:927.15px;font-size:16px;color:#f2f2f2;">Vq</div>
<div class="a" style="left:481.6px;top:983.75px;font-size:16px;color:#f2f2f2;">Iae</div>
<div class="a" style="left:481.6px;top:1012.35px;font-size:16px;color:#f2f2f2;">Ibe</div>
<div class="a" style="left:572.7px;top:898.35px;font-size:16px;color:#f2f2f2;">Id</div>
<div class="a" style="left:572.7px;top:927.15px;font-size:16px;color:#f2f2f2;">Iq</div>
<div class="a" style="left:572.7px;top:983.75px;font-size:16px;color:#f2f2f2;">Iar</div>
<div class="a" style="left:572.7px;top:1012.35px;font-size:16px;color:#f2f2f2;">Ibr</div>
<div class="a" style="left:663.8px;top:898.35px;font-size:16px;color:#f2f2f2;">TS</div>
<div class="a" style="left:663.8px;top:927.15px;font-size:16px;color:#f2f2f2;">PP</div>
<div class="a" style="left:663.8px;top:955.25px;font-size:16px;color:#f2f2f2;">I1Z</div>
<div class="a" style="left:663.8px;top:983.75px;font-size:16px;color:#f2f2f2;">IaZ</div>
<div class="a" style="left:663.8px;top:1012.35px;font-size:16px;color:#f2f2f2;">IbZ</div>
<div class="a" style="left:743.6px;top:901.85px;font-size:16px;color:#f2f2f2;">I phase:</div>
<div class="a" style="left:743.6px;top:938.75px;font-size:16px;color:#f2f2f2;">PPlo (dB):</div>
<div class="a" style="left:743.6px;top:975.65px;font-size:16px;color:#f2f2f2;">PPhi (dB):</div>
<div class="a" style="left:832.6px;top:894.6px;width:105px;height:27.4px;background:#fff;"></div>
<div class="a" style="left:913px;top:894.6px;width:24.6px;height:27.4px;background:#ececec;"></div>
<div class="a" style="left:837.0px;top:901.80px;font-size:15px;color:#111;">I1</div>
<div class="a" style="left:833.2px;top:933.2px;width:104px;height:24.1px;background:#f0f0f0;box-shadow:inset 0 0 0 1px #dcdcdc;"></div>
<div class="a" style="left:833.2px;top:970px;width:104px;height:24.2px;background:#f0f0f0;box-shadow:inset 0 0 0 1px #dcdcdc;"></div>
<div class="a" style="left:835.0px;top:937.25px;font-size:16px;color:#111;letter-spacing:-0.6px;">52.24</div>
<div class="a" style="left:835.0px;top:974.25px;font-size:16px;color:#111;letter-spacing:-0.6px;">63.59</div>
<div class="a" style="left:958.4px;top:900.15px;font-size:16px;color:#f2f2f2;">Yl max:</div>
<div class="a" style="left:958.4px;top:937.75px;font-size:16px;color:#f2f2f2;">Yl min:</div>
<div class="a" style="left:1137.2px;top:900.15px;font-size:16px;color:#f2f2f2;">Yr max:</div>
<div class="a" style="left:1137.2px;top:937.75px;font-size:16px;color:#f2f2f2;">Yr min:</div>
<div class="a" style="left:1022.8px;top:894.2px;width:106px;height:24.5px;background:#fff;"></div>
<div class="a" style="left:1024.3px;top:898.25px;font-size:16px;color:#111;letter-spacing:-0.6px;">10.00</div>
<div class="a" style="left:1022.8px;top:931.1px;width:106px;height:24.5px;background:#fff;"></div>
<div class="a" style="left:1024.3px;top:935.15px;font-size:16px;color:#111;letter-spacing:-0.6px;">0.00</div>
<div class="a" style="left:1201.7px;top:894.2px;width:106px;height:24.5px;background:#fff;"></div>
<div class="a" style="left:1203.2px;top:898.25px;font-size:16px;color:#111;letter-spacing:-0.6px;">0.00</div>
<div class="a" style="left:1201.7px;top:931.1px;width:106px;height:24.5px;background:#fff;"></div>
<div class="a" style="left:1203.2px;top:935.15px;font-size:16px;color:#111;letter-spacing:-0.6px;">-10.00</div>
<div class="a" style="left:983.6px;top:972.25px;font-size:16px;color:#f2f2f2;">Y auto</div>
<svg width="1907" height="1040">
<rect x="12.25" y="969.25" width="14" height="14" fill="#7f7f7f" stroke="#f2f2f2" stroke-width="1.6"/>
<rect x="12.25" y="994.25" width="14" height="14" fill="#7f7f7f" stroke="#f2f2f2" stroke-width="1.6"/>
<rect x="12.25" y="1021.05" width="14" height="14" fill="#7f7f7f" stroke="#f2f2f2" stroke-width="1.6"/>
<rect x="248.2" y="893.2" width="25" height="23.6" fill="#b84aa8"/>
<rect x="277.25" y="898.0500000000001" width="14" height="14" fill="#7f7f7f" stroke="#f2f2f2" stroke-width="1.6"/>
<rect x="248.2" y="922.0" width="25" height="23.6" fill="#5cc0e0"/>
<rect x="277.25" y="926.85" width="14" height="14" fill="#7f7f7f" stroke="#f2f2f2" stroke-width="1.6"/>
<rect x="248.2" y="950.1" width="25" height="23.6" fill="#90cc80"/>
<rect x="277.25" y="954.95" width="14" height="14" fill="#7f7f7f" stroke="#f2f2f2" stroke-width="1.6"/>
<rect x="248.2" y="978.6" width="25" height="23.6" fill="#f6ea12"/>
<rect x="277.25" y="983.45" width="14" height="14" fill="#7f7f7f" stroke="#f2f2f2" stroke-width="1.6"/>
<rect x="248.2" y="1007.2" width="25" height="23.6" fill="#ade0e8"/>
<rect x="277.25" y="1012.0500000000001" width="14" height="14" fill="#7f7f7f" stroke="#f2f2f2" stroke-width="1.6"/>
<rect x="339.1" y="893.2" width="25" height="23.6" fill="#ee1c24"/>
<rect x="368.15000000000003" y="898.0500000000001" width="14" height="14" fill="#7f7f7f" stroke="#f2f2f2" stroke-width="1.6"/><path d="M370.6,905.1 L373.6,908.3000000000001 L379.40000000000003,901.1" fill="none" stroke="#fff" stroke-width="2.6"/>
<rect x="339.1" y="922.0" width="25" height="23.6" fill="#3a52aa"/>
<rect x="368.15000000000003" y="926.85" width="14" height="14" fill="#7f7f7f" stroke="#f2f2f2" stroke-width="1.6"/>
<rect x="339.1" y="950.1" width="25" height="23.6" fill="#0f8a48"/>
<rect x="368.15000000000003" y="954.95" width="14" height="14" fill="#7f7f7f" stroke="#f2f2f2" stroke-width="1.6"/>
<rect x="339.1" y="978.6" width="25" height="23.6" fill="#7c2a90"/>
<rect x="368.15000000000003" y="983.45" width="14" height="14" fill="#7f7f7f" stroke="#f2f2f2" stroke-width="1.6"/>
<rect x="339.1" y="1007.2" width="25" height="23.6" fill="#52c0b8"/>
<rect x="368.15000000000003" y="1012.0500000000001" width="14" height="14" fill="#7f7f7f" stroke="#f2f2f2" stroke-width="1.6"/>
<rect x="430.9" y="893.2" width="25" height="23.6" fill="#d48cc4"/>
<rect x="459.95" y="898.0500000000001" width="14" height="14" fill="#7f7f7f" stroke="#f2f2f2" stroke-width="1.6"/>
<rect x="430.9" y="922.0" width="25" height="23.6" fill="#f8a81c"/>
<rect x="459.95" y="926.85" width="14" height="14" fill="#7f7f7f" stroke="#f2f2f2" stroke-width="1.6"/>
<rect x="430.9" y="978.6" width="25" height="23.6" fill="#8a74c0"/>
<rect x="459.95" y="983.45" width="14" height="14" fill="#7f7f7f" stroke="#f2f2f2" stroke-width="1.6"/>
<rect x="430.9" y="1007.2" width="25" height="23.6" fill="#b02a2a"/>
<rect x="459.95" y="1012.0500000000001" width="14" height="14" fill="#7f7f7f" stroke="#f2f2f2" stroke-width="1.6"/>
<rect x="522.0" y="893.2" width="25" height="23.6" fill="#8a70c4"/>
<rect x="551.05" y="898.0500000000001" width="14" height="14" fill="#7f7f7f" stroke="#f2f2f2" stroke-width="1.6"/>
<rect x="522.0" y="922.0" width="25" height="23.6" fill="#f4a868"/>
<rect x="551.05" y="926.85" width="14" height="14" fill="#7f7f7f" stroke="#f2f2f2" stroke-width="1.6"/>
<rect x="522.0" y="978.6" width="25" height="23.6" fill="#2a3088"/>
<rect x="551.05" y="983.45" width="14" height="14" fill="#7f7f7f" stroke="#f2f2f2" stroke-width="1.6"/>
<rect x="522.0" y="1007.2" width="25" height="23.6" fill="#1a6e38"/>
<rect x="551.05" y="1012.0500000000001" width="14" height="14" fill="#7f7f7f" stroke="#f2f2f2" stroke-width="1.6"/>
<rect x="613.1" y="893.2" width="25" height="23.6" fill="#7c7c7c"/>
<rect x="642.15" y="898.0500000000001" width="14" height="14" fill="#7f7f7f" stroke="#f2f2f2" stroke-width="1.6"/>
<rect x="613.1" y="922.0" width="25" height="23.6" fill="#7a2890"/>
<rect x="642.15" y="926.85" width="14" height="14" fill="#7f7f7f" stroke="#f2f2f2" stroke-width="1.6"/><path d="M644.6,933.9 L647.6,937.1 L653.4,929.9" fill="none" stroke="#fff" stroke-width="2.6"/>
<rect x="613.1" y="950.1" width="25" height="23.6" fill="#f8bcd0"/>
<rect x="642.15" y="954.95" width="14" height="14" fill="#7f7f7f" stroke="#f2f2f2" stroke-width="1.6"/>
<rect x="613.1" y="978.6" width="25" height="23.6" fill="#f48c20"/>
<rect x="642.15" y="983.45" width="14" height="14" fill="#7f7f7f" stroke="#f2f2f2" stroke-width="1.6"/>
<rect x="613.1" y="1007.2" width="25" height="23.6" fill="#a4dc8c"/>
<rect x="642.15" y="1012.0500000000001" width="14" height="14" fill="#7f7f7f" stroke="#f2f2f2" stroke-width="1.6"/>
<path d="M921.5,906.5 L928.5,906.5 L925,910.5 Z" fill="#222"/>
<rect x="960.5" y="972" width="14.6" height="14.6" fill="#8c8c8c" stroke="#d8d8d8" stroke-width="1.4"/>
<path d="M963.5,979.5 L966.5,983 L972,975.5" fill="none" stroke="#e8e8e8" stroke-width="2.2"/>
</svg>
<svg width="1907" height="1040">
<path d="M475.7,186 C459,186.5 451.5,193 451.5,206 L451.5,321 C451.5,333 441,340 427.3,340.3 C441,340.6 451.5,347 451.5,359 L451.5,477 C451.5,488 460,494 475.7,494.2" fill="none" stroke="#4169b2" stroke-width="3"/>
<path d="M335,519.5 L421.5,351.5" stroke="#4169b2" stroke-width="4.5"/>
<path d="M427.3,340.3 L414.6,349.3 L425.6,355 Z" fill="#4169b2"/>
<path d="M335,519.5 L711,924.5" stroke="#4169b2" stroke-width="4.8"/>
<path d="M719.8,933.7 L706.5,929.3 L716,920.5 Z" fill="#4169b2"/>
<ellipse cx="196.4" cy="523" rx="139" ry="75.6" fill="none" stroke="#e0242c" stroke-width="4"/>
<ellipse cx="847.2" cy="961.5" rx="127" ry="46" fill="none" stroke="#e0242c" stroke-width="4"/>
</svg>
</body></html>
